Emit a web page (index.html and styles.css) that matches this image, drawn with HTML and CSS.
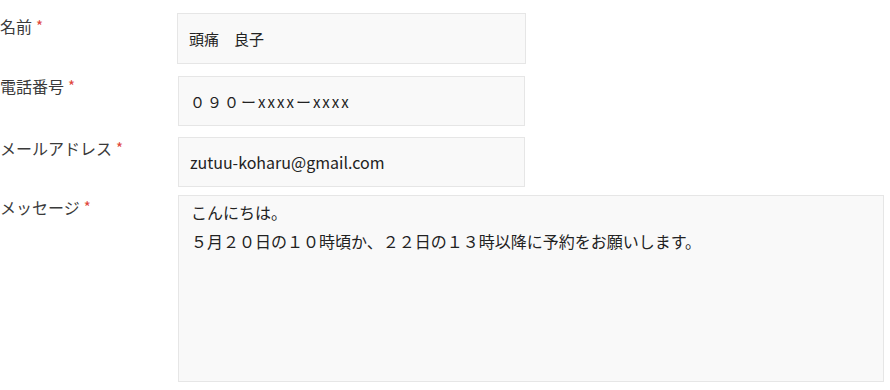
FILE: index.html
```html
<!DOCTYPE html>
<html lang="ja">
<head>
<meta charset="utf-8">
<title>お問い合わせ</title>
<link rel="stylesheet" href="styles.css">
</head>
<body>
<form class="form">
  <div class="row row-name">
    <div class="label">名前<span class="req">*</span></div>
    <div class="field field-name">頭痛　良子</div>
  </div>
  <div class="row row-tel">
    <div class="label">電話番号<span class="req">*</span></div>
    <div class="field field-tel">０９０ーxxxxーxxxx</div>
  </div>
  <div class="row row-mail">
    <div class="label">メールアドレス<span class="req">*</span></div>
    <div class="field field-mail">zutuu-koharu@gmail.com</div>
  </div>
  <div class="row row-msg">
    <div class="label">メッセージ<span class="req">*</span></div>
    <div class="area">
      <p class="line">こんにちは。</p>
      <p class="line">５月２０日の１０時頃か、２２日の１３時以降に予約をお願いします。</p>
    </div>
  </div>
</form>
</body>
</html>
```

FILE: styles.css
```css
html, body {
  margin: 0;
  padding: 0;
  background: #ffffff;
}

body {
  font-family: "Noto Sans CJK JP", "Noto Sans", sans-serif;
  color: #333333;
  width: 890px;
  height: 390px;
  overflow: hidden;
}

.form {
  display: flex;
  flex-direction: column;
  padding-top: 13px;
}

.row {
  display: flex;
  align-items: flex-start;
}

.row-tel { margin-top: 12px; }
.row-mail { margin-top: 11px; }
.row-msg { margin-top: 8px; }

.label {
  width: 178px;
  flex: none;
  font-size: 16px;
  line-height: 18px;
  color: #3a3a3a;
  padding-top: 2px;
}

.row-name .label { padding-top: 4px; }
.row-tel .label { padding-top: 1px; }
.row-msg .label { padding-top: 3px; }

.req {
  color: #e0453a;
  font-size: 15px;
  margin-left: 4px;
  vertical-align: 1px;
}

.field {
  box-sizing: border-box;
  width: 347px;
  height: 50px;
  background: #f9f9f9;
  border: 1px solid #e6e6e6;
  display: flex;
  align-items: center;
  padding: 0 11px;
  font-size: 15px;
  color: #222222;
}

.field-name {
  height: 51px;
  width: 349px;
  margin-left: -1px;
}

.field-tel {
  letter-spacing: 2px;
}

.field-mail {
  font-size: 16px;
}

.area {
  box-sizing: border-box;
  width: 706px;
  height: 187px;
  background: #f9f9f9;
  border: 1px solid #e6e6e6;
  padding: 2px 12px 1px;
  font-size: 16px;
  line-height: 29px;
  color: #222222;
}

.line {
  margin: 0;
}
```
